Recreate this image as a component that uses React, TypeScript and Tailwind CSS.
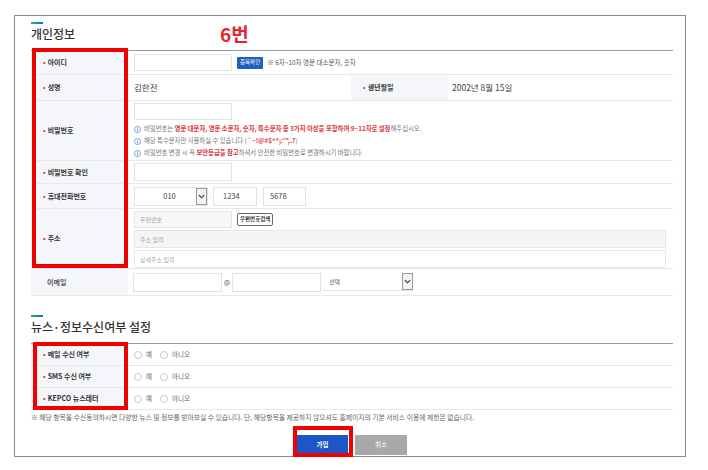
import React from "react";

const Req = () => <span className="text-[#e0323a] mr-[2px]">•</span>;

function Label({ children, req = true, w = "w-[97px]" }: { children: React.ReactNode; req?: boolean; w?: string }) {
  return (
    <div className={`${w} shrink-0 bg-[#f4f6f9] flex items-center pl-[12px] text-[7px] font-bold text-[#333]`}>
      {req && <Req />}
      {children}
    </div>
  );
}

const Info = () => (
  <svg width="7" height="7" viewBox="0 0 10 10" className="mr-[3px] shrink-0">
    <circle cx="5" cy="5" r="4.3" fill="none" stroke="#3d7fd6" strokeWidth="1" />
    <rect x="4.5" y="4.2" width="1" height="3.4" fill="#3d7fd6" />
    <rect x="4.5" y="2.4" width="1" height="1" fill="#3d7fd6" />
  </svg>
);

const Arrow = () => (
  <div className="w-[11px] h-full border border-[#999] bg-[#f4f4f4] flex items-center justify-center">
    <svg width="7" height="5" viewBox="0 0 8 5">
      <path d="M1 1 L4 4 L7 1" fill="none" stroke="#333" strokeWidth="1.3" />
    </svg>
  </div>
);

const Radio = ({ text }: { text: string }) => (
  <div className="flex items-center mr-[8px]">
    <span className="w-[8px] h-[8px] rounded-full border border-[#c8c8c8] bg-white mr-[4px]" />
    <span className="text-[6.5px] text-[#666]">{text}</span>
  </div>
);

export default function App() {
  const row = "flex border-b border-[#e8e8e8]";
  return (
    <div className="relative w-[708px] h-[470px] bg-white overflow-hidden font-['Noto_Sans_CJK_KR','Noto_Sans',sans-serif]">
      <div className="pt-[15px] pl-[14px]">
        <div className="relative w-[672px] h-[442px] border border-[#8a8a8a] pl-[16px] pr-[12px]">
          <div className="absolute left-[205px] top-[8px] text-[19px] font-bold text-[#e8232b] leading-[20px]">6번</div>
          <div className="mt-[6px] w-[12px] h-[2px] bg-gradient-to-r from-[#3bb54a] to-[#1d63c9]" />
          <div className="h-[26px] pt-[3px] text-[12px] leading-[14px] font-medium text-[#333]">개인정보</div>

          <div className="border-t border-[#8c9fb3]">
            {/* 아이디 */}
            <div className={`${row} h-[24px]`}>
              <Label>아이디</Label>
              <div className="flex items-center pl-[6px]">
                <div className="w-[98px] h-[17px] border border-[#e2e2e2] bg-white" />
                <div className="ml-[5px] h-[12px] px-[3px] bg-[#1e5fc2] rounded-[1px] text-[5.5px] text-white flex items-center">중복확인</div>
                <div className="ml-[4px] text-[6.5px] text-[#555]">※ 6자~10자 영문 대소문자, 숫자</div>
              </div>
            </div>
            {/* 성명 */}
            <div className={`${row} h-[26px]`}>
              <Label>성명</Label>
              <div className="w-[223px] flex items-center pl-[6px] text-[8.5px] text-[#444]">김한전</div>
              <Label>생년월일</Label>
              <div className="flex items-center pl-[4px] text-[8.5px] text-[#444]">2002년 8월 15일</div>
            </div>
            {/* 비밀번호 */}
            <div className={`${row} h-[60px]`}>
              <Label>비밀번호</Label>
              <div className="pl-[6px] pt-[2px] flex flex-col">
                <div className="w-[98px] h-[17px] border border-[#e2e2e2] bg-white" />
                <div className="mt-[3px] flex items-center h-[12px] text-[6.35px] text-[#777]">
                  <Info />
                  <span>비밀번호는&nbsp;</span>
                  <span className="text-[#d9363e] font-bold">영문 대문자, 영문 소문자, 숫자, 특수문자 중 3가지 이상을 포함하여 9~12자로 설정</span>
                  <span>해주십시오.</span>
                </div>
                <div className="flex items-center h-[12px] text-[6.35px] text-[#777]">
                  <Info />
                  <span>해당 특수문자만 사용하실 수 있습니다 (&nbsp;</span>
                  <span className="text-[#d9363e] font-bold">`~!@#$^*;:'",.?</span>
                  <span>)</span>
                </div>
                <div className="flex items-center h-[12px] text-[6.35px] text-[#777]">
                  <Info />
                  <span>비밀번호 변경 시 꼭&nbsp;</span>
                  <span className="text-[#d9363e] font-bold">보안등급을 참고</span>
                  <span>하셔서 안전한 비밀번호로 변경하시기 바랍니다.</span>
                </div>
              </div>
            </div>
            {/* 비밀번호 확인 */}
            <div className={`${row} h-[23px]`}>
              <Label>비밀번호 확인</Label>
              <div className="flex items-center pl-[6px]">
                <div className="w-[98px] h-[18px] border border-[#e2e2e2] bg-white" />
              </div>
            </div>
            {/* 휴대전화번호 */}
            <div className={`${row} h-[25px]`}>
              <Label>휴대전화번호</Label>
              <div className="flex items-center pl-[6px] text-[7.5px] text-[#444]">
                <div className="w-[74px] h-[19px] border border-[#e2e2e2] flex items-center">
                  <div className="flex-1 text-center pl-[8px]">010</div>
                  <Arrow />
                </div>
                <span className="w-[5px] text-center text-[#bbb] text-[6px]">-</span>
                <div className="w-[44px] h-[19px] border border-[#e2e2e2] flex items-center pl-[9px]">1234</div>
                <span className="w-[6px] text-center text-[#bbb] text-[6px]">-</span>
                <div className="w-[43px] h-[19px] border border-[#e2e2e2] flex items-center pl-[6px]">5678</div>
              </div>
            </div>
            {/* 주소 */}
            <div className={`${row} h-[60px]`}>
              <Label>주소</Label>
              <div className="flex-1 pl-[6px] pr-[7px] pt-[2px] flex flex-col gap-[2px] text-[6px] text-[#aaa]">
                <div className="flex items-center">
                  <div className="w-[98px] h-[17px] border border-[#e6e6e6] bg-[#f7f7f7] flex items-center pl-[5px]">우편번호</div>
                  <div className="ml-[5px] h-[13px] px-[2px] border border-[#666] rounded-[2px] bg-white text-[5.5px] font-bold text-[#333] flex items-center">우편번호검색</div>
                </div>
                <div className="h-[18px] border border-[#e6e6e6] bg-[#f5f5f5] flex items-center pl-[5px]">주소 입력</div>
                <div className="h-[18px] border border-[#e6e6e6] bg-white flex items-center pl-[5px]">상세주소 입력</div>
              </div>
            </div>
            {/* 이메일 */}
            <div className={`${row} h-[27px]`}>
              <div className="w-[97px] shrink-0 bg-[#f4f6f9] flex items-center pl-[16px] text-[7px] font-medium text-[#333]">이메일</div>
              <div className="flex items-center pl-[5px] text-[7px] text-[#555]">
                <div className="w-[89px] h-[19px] border border-[#e2e2e2]" />
                <span className="w-[10px] text-center text-[7px]">@</span>
                <div className="w-[89px] h-[19px] border border-[#e2e2e2]" />
                <div className="ml-[2px] w-[90px] h-[18px] border-b border-[#e2e2e2] flex items-center">
                  <div className="flex-1 pl-[6px] text-[6px]">선택</div>
                  <Arrow />
                </div>
              </div>
            </div>
          </div>

          <div className="mt-[19px] w-[12px] h-[2px] bg-gradient-to-r from-[#3bb54a] to-[#1d63c9]" />
          <div className="h-[26px] pt-[3px] text-[12px] leading-[14px] font-medium text-[#333]">뉴스·정보수신여부 설정</div>
          <div className="border-t border-[#8c9fb3]">
            {["메일 수신 여부", "SMS 수신 여부", "KEPCO 뉴스레터"].map((t) => (
              <div key={t} className={`${row} h-[22px]`}>
                <Label>{t}</Label>
                <div className="flex items-center pl-[6px]">
                  <Radio text="예" />
                  <Radio text="아니오" />
                </div>
              </div>
            ))}
          </div>
          <div className="mt-[2px] text-[6.8px] leading-[10px] text-[#666] whitespace-nowrap">
            ※ 해당 항목을 수신동의하시면 다양한 뉴스 및 정보를 받아보실 수 있습니다. 단, 해당항목을 제공하지 않으셔도 홈페이지의 기본 서비스 이용에 제한은 없습니다.
          </div>
          <div className="mt-[13px] flex justify-center gap-[7px]">
            <div className="w-[51px] h-[20px] bg-[#1b57c6] text-white text-[6.5px] font-bold flex items-center justify-center">가입</div>
            <div className="w-[52px] h-[20px] bg-[#a8a8a8] text-white text-[6.5px] flex items-center justify-center">취소</div>
          </div>
        </div>
      </div>

      <div className="absolute left-[32px] top-[48px] w-[96px] h-[220px] border-[4px] border-[#f20000]" />
      <div className="absolute left-[33px] top-[342px] w-[95px] h-[68px] border-[4px] border-[#f20000]" />
      <div className="absolute left-[293px] top-[426px] w-[60px] h-[31px] border-[4px] border-[#f20000]" />
    </div>
  );
}
